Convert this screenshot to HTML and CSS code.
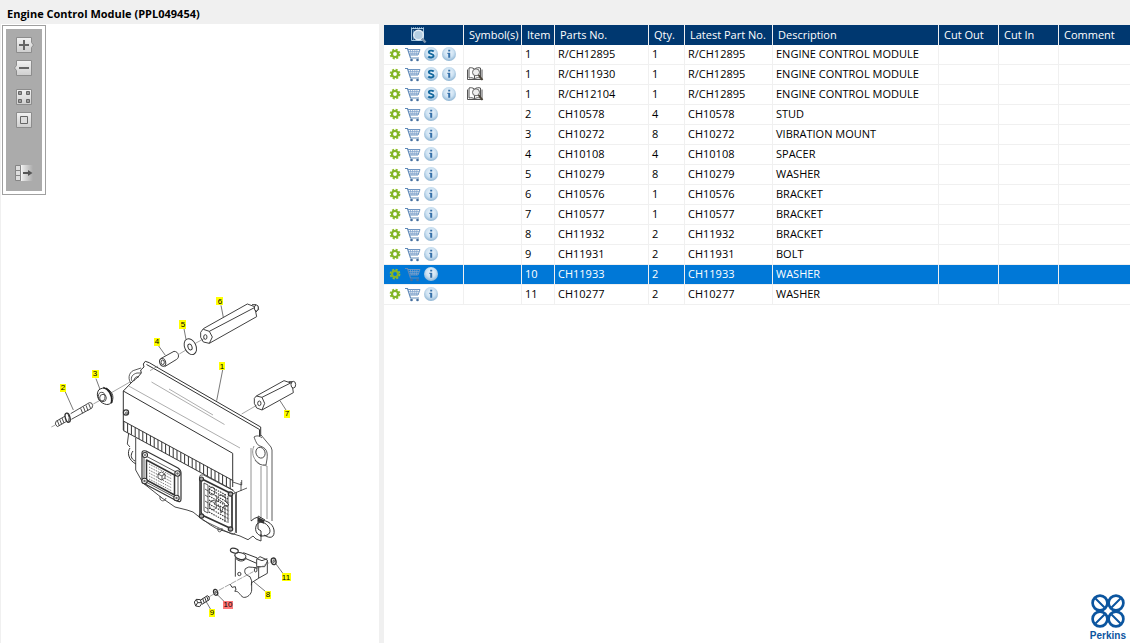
FILE: index.html
```html
<!DOCTYPE html>
<html lang="en">
<head>
<meta charset="utf-8">
<title>Engine Control Module (PPL049454)</title>
<link rel="stylesheet" href="styles.css">
</head>
<body>
<svg class="defs" aria-hidden="true">
  <defs>
    <radialGradient id="disc" cx=".5" cy=".4" r=".6"><stop offset="0" stop-color="#eef6fc"/><stop offset=".55" stop-color="#cfe3f3"/><stop offset="1" stop-color="#8db4d3"/></radialGradient>
    <linearGradient id="key" x1="0" y1="0" x2="0" y2="1"><stop offset="0" stop-color="#f2f2f2"/><stop offset="1" stop-color="#cecece"/></linearGradient>
    <linearGradient id="fade"><stop offset="0" stop-color="#f0f0f0"/><stop offset="1" stop-color="#ababab"/></linearGradient>
    <symbol id="gear" viewBox="0 0 14 16">
      <circle cx="7" cy="8" r="4.3" fill="none" stroke="#8fbe2e" stroke-width="2.2" stroke-dasharray="2 1.38"/>
      <circle cx="7" cy="8" r="3" fill="none" stroke="#83b428" stroke-width="2.2"/>
    </symbol>
    <symbol id="cart" viewBox="0 0 17 16">
      <path d="M1 2.500h2.500l3 9.500H15" fill="none" stroke="#5f89b8" stroke-width="1.200"/>
      <path d="M4 3.500h12l-2 5.500H6" fill="none" stroke="#6c93c0"/>
      <path d="M5 5.400h10M5.500 7.300h9M6.300 3.500l1 5.500M8.500 3.500L9 9M10.800 3.500V9M13 3.500L12.500 9" stroke="#7fa2cb" stroke-width=".8"/>
      <circle cx="7.500" cy="14" r="1.300" fill="#456f9f"/><circle cx="13.500" cy="14" r="1.300" fill="#456f9f"/>
    </symbol>
    <symbol id="info" viewBox="0 0 16 16">
      <circle cx="8" cy="8" r="7" fill="url(#disc)"/>
      <path d="M7.2 3.8h2v1.8h-2zM6.4 6.8h2.800v5H7.200V8h-.8z" fill="#3670a8"/>
    </symbol>
    <symbol id="super" viewBox="0 0 16 16">
      <circle cx="8" cy="8" r="7" fill="url(#disc)"/>
      <path d="M10.7 5.5C9.5 4.2 5.8 4.2 5.8 6.2c0 2 4.8 1.3 4.8 3.6 0 2.1-4 2.1-5.3.7" fill="none" stroke="#15699f" stroke-width="1.9"/>
    </symbol>
    <symbol id="book" viewBox="0 0 17 16">
      <path d="M7.500 3C5.500 1.500 3.500 1.500 2 2v10c2-.6 4-.3 5.500 1 1.500-1.300 3.500-1.600 6-1V2c-2-.5-4-.5-6 1v10" fill="#fff" stroke="#555"/>
      <path d="M.500 3.500v10h14.500v-10" fill="none" stroke="#555"/>
      <circle cx="9" cy="6.300" r="3.500" fill="#eee" stroke="#666"/>
      <path d="M11.500 9l4 5" stroke="#4b4438" stroke-width="2"/>
    </symbol>
    <symbol id="find" viewBox="0 0 18 18">
      <path d="M1.500 2.500h12v12h-12z" fill="#13406f" stroke="#9fc4df"/>
      <path d="M1 2h13" stroke="#d6e6f2" stroke-dasharray="1 1"/>
      <path d="M3.500 4v10" stroke="#4f86b2"/>
      <circle cx="8.500" cy="9" r="4.800" fill="#b5cfe2" stroke="#e4eef6" stroke-width="1.400"/>
      <path d="M12 12.500l3.500 4" stroke="#7d95ad" stroke-width="2.400"/>
    </symbol>
  </defs>
</svg>

<header class="title-bar"><h1>Engine Control Module (PPL049454)</h1></header>
<main class="panes">
  <section class="viewer" aria-label="Illustration">
    <div class="toolbar" role="toolbar" aria-label="View">
      <button aria-label="Zoom in"><svg viewBox="0 0 18 16"><path d="M.500.500h15v5l2 2.500-2 2.500v5H.500z" fill="url(#key)" stroke="#8c8c8c"/><path d="M8 3v10M3 8h10" stroke="#666" stroke-width="2"/></svg></button>
      <button aria-label="Zoom out"><svg viewBox="0 0 18 16"><path d="M.500.500h15v15H.500v-5L-1.500 8l2-2.500z" fill="url(#key)" stroke="#8c8c8c"/><path d="M3 8h10" stroke="#666" stroke-width="2"/></svg></button>
      <button class="spaced" aria-label="Tile"><svg viewBox="0 0 18 16"><path d="M.500.500h15v15H.500z" fill="url(#key)" stroke="#8c8c8c"/><path d="M2.500 2.500h3v3h-3zM10.500 2.500h3v3h-3zM2.500 10.500h3v3h-3zM10.500 10.500h3v3h-3z" fill="#999" stroke="#666"/></svg></button>
      <button aria-label="Fit"><svg viewBox="0 0 18 16"><path d="M.500.500h15v15H.500z" fill="url(#key)" stroke="#8c8c8c"/><path d="M4.500 4.500h7v7h-7z" fill="#ddd" stroke="#666"/></svg></button>
      <button class="apart" aria-label="Hide list"><svg viewBox="0 0 18 16"><path d="M5 0h12v16H5z" fill="url(#fade)"/><path d="M-.500.500h5v5h-5zM-.500 5.500h5v5h-5zM-.500 10.500h5v5h-5z" fill="#ddd" stroke="#858585"/><path d="M5.500 0v16" stroke="#f4f4f4"/><path d="M7 8h6" stroke="#555" stroke-width="2"/><path d="M12 5l4.500 3-4.500 3z" fill="#555"/></svg></button>
    </div>

    <svg class="drawing" viewBox="50 290 250 330" role="img" aria-label="Exploded view">
      <g fill="none" stroke="#333" stroke-width=".8" stroke-linejoin="round">
        <!-- housing -->
        <path d="M130.700 383C127 377 130 371 135 370l6-2M132 381c-2-4 1-7 5-8l4 0M134 381c0-3 2-5 5-4" />
        <path d="M123.300 430v-39l8.700-9 6-5 3.300-4-.6-3 3.300-3-.7-3 2-2.700 4 1.400L160 369l100.700 58v9M146.500 364.500L160 372l99.500 57.500v7" stroke-width="1"/>
        <path d="M123.300 391l109.400 62.300V487" stroke-width="1"/>
        <path d="M128.700 386L240 448M151.500 382l73 42.500M169 389l44 26" stroke="#777" stroke-width=".6"/>
        <circle cx="126" cy="412.500" r="2.600" stroke-width="1.200"/><circle cx="126.500" cy="413" r="1"/>
        <g transform="translate(123.300 421) skewY(28.500)"><path d="M0 0h110M0 9.500h110" stroke-width="1"/><path d="M0 4.700h110" stroke-width="9.500" stroke-dasharray="1 2.800"/></g>
        <path d="M128.700 433l-1.400 11 2.700 3M135.700 438v32l7.300 13 19 15 13 9 12 3 6 2 5 4 5.300 3.700 6.700 5 6.700 4 23.300 7.300 8 3.700 5-3.700 3 3 5 2v-7" stroke-width=".9"/>
        <path d="M130 448c-3 4-2 12 6 16M133 451c-3 4-2 8 2 10" stroke-width="1"/>
        <path d="M160 496v3c2 3 5 2 6-1M218 528v3c2 2 4 0 4-3"/>
        <path d="M232.700 482l9 3v-5M230 495l17-7M241 482v9M236.500 492v41" />
        <!-- left connector -->
        <path d="M142 453q0-3 4-2l32 17q3 2 3 5v26q0 4-4 2l-32-17q-3-2-3-5z" stroke-width="1.200"/>
        <path d="M144 455l34 18v26l-34-18z"/>
        <path d="M146.500 460l28 15v20l-28-15z" stroke-width="1.500"/>
        <path d="M149 464l23 12M149 467l23 12M149 470l23 12M149 473l23 12M149 476l23 12M149 479l23 12" stroke-dasharray="1 1"/>
        <g fill="#fff" stroke-width="1.100"><circle cx="145" cy="455" r="2.500"/><circle cx="177.500" cy="473.500" r="2.700"/><circle cx="144.500" cy="481" r="2.700"/><circle cx="176.500" cy="498" r="2.700"/><path d="M158 474l3.500-2 3.500 2v4l-3.500 2-3.500-2zM158 474l4 2 3-2M162 476v4" stroke-width=".8"/></g>
        <g fill="#666" stroke="none"><circle cx="145" cy="455" r="1"/><circle cx="177.500" cy="473.500" r="1.200"/><circle cx="144.500" cy="481" r="1.200"/><circle cx="176.500" cy="498" r="1.200"/></g>
        <!-- right connector -->
        <path d="M199.500 477q0-3 4-2l29 15q3 2 3 5v36q0 4-4 3l-29-14q-3-2-3-5z"/>
        <path d="M202 479l28 14q2 1 2 4v32l-28-13q-3-1-3-4v-31z" stroke-width="1.700"/>
        <path d="M204 483v28l4 2v-28zM205 489l3 2M205 495l3 2M205 501l3 2M205 507l3 2M225 494v28M228 496v27"/>
        <g fill="#fff"><ellipse cx="212" cy="491" rx="3" ry="4"/><ellipse cx="221" cy="501" rx="5" ry="6"/><ellipse cx="213" cy="505" rx="3.500" ry="4.500"/><path d="M215 495l4 5-5 4 6 3 1 6 3-7 5-1-4-4M218 499l7 5"/></g>
        <path d="M209 486l17 9M209 489l19 10M209 492l20 11M209 496l19 11M209 500l20 11M209 504l20 11M209 508l20 11M209 512l18 10" stroke-dasharray="1.500 1" stroke-width="1.100"/>
        <g fill="#aaa" stroke-width="1.200"><circle cx="201.500" cy="479" r="2"/><circle cx="230.500" cy="494" r="2.200"/><circle cx="201.500" cy="516" r="2.200"/><circle cx="230.500" cy="529" r="2.200"/></g>
        <!-- right flange -->
        <path d="M261 435l10 12 1 3v71M254 437c3-2 6-1 8 1M254 437c2 5 3 8 6 9 6 2 8 5 7 13l-1 6q-7 1-11-5"/>
        <ellipse cx="260.500" cy="452.700" rx="4.500" ry="5.500" transform="rotate(-20 260.500 452.700)"/>
        <path d="M251 448v73M254 446c-3 6-1 14 6 18M261 466v52M263 465l4 1v53" stroke="#777"/>
        <path d="M251 521q3-3 7-4v12l3 2v6M258 516l7 4M258 519l6 3" stroke-width="1"/>
        <path d="M258 522c6-4 15 1 16 8 1 8-4 9-10 5M257 524c-3 5-1 11 5 12 8 0 10-5 6-10s-9-4-11-2z" stroke-width="1"/>
        <path d="M258 518l6 3M258 520l6 3" stroke-width="1.600"/>

        <!-- stud and mount -->
        <g transform="translate(40 290) scale(.333333)" stroke-width="2.600">
          <path d="M34 411l12-6M160 342l20-11M216 307l54-31" stroke="#777" stroke-width="2"/>
          <path d="M76 378l-28 16q-6 8 4 16l28-16M52 392l6 15M59 388l6 15M66 384l6 15M92 371l56-33q8-2 10 8l-2 8-62 34M122 355l6 15M130 350l6 16M138 346l6 16M146 341l6 15"/>
          <ellipse cx="83" cy="383" rx="7" ry="14" transform="rotate(-15 83 383)" fill="#fff" stroke-width="4"/><path d="M84 372q6 10 2 22"/>
          <path d="M176 300c14-12 36-4 42 16 4 20-10 32-24 26-18-6-28-26-18-42z" fill="#fff" stroke-width="3"/>
          <path d="M190 292q26 10 26 46M198 294q22 14 16 46" stroke-width="4" stroke="#222"/>
          <ellipse cx="185" cy="320" rx="10" ry="13"/><ellipse cx="189" cy="324" rx="10" ry="11"/>
          <path d="M76 306l24 54M168 266l12 32M356 168l20 28" stroke-width="2"/>
        </g>
        <!-- spacer, washer, rods -->
        <g transform="translate(160 290) scale(.333333)" stroke-width="2.800">
          <path d="M58 192l20-12M106 160l28-15M245 372l45-26M-30 242l24-14" stroke="#777" stroke-width="2"/>
          <path d="M2 206l40-22c14 0 18 18 8 24l-36 22" fill="#fff"/>
          <ellipse cx="8" cy="217" rx="9" ry="12" fill="#fff" transform="rotate(-15 8 217)"/><ellipse cx="8" cy="217" rx="5" ry="7"/>
          <ellipse cx="91" cy="170" rx="17" ry="25" transform="rotate(-25 91 170)"/><ellipse cx="90" cy="171" rx="6" ry="9" transform="rotate(-20 90 171)"/>
          <path d="M122 127l8-11L262 42l22 8 6 30-142 80-18-4-8-14zM130 118l18 6 9 17-9 19M148 124l137-72M276 44l12 0q9 6 8 14l-8 8"/>
          <ellipse cx="136" cy="141" rx="5" ry="7"/><ellipse cx="289" cy="54" rx="6" ry="9" fill="#fff"/>
          <path d="M283 325l6-7 83-46 24 8 4 28-94 52-16-6-7-14zM289 318l17 4 8 18-8 20M306 322l86-43"/>
          <ellipse cx="298" cy="340" rx="5" ry="7"/><ellipse cx="400" cy="284" rx="7" ry="10" fill="#fff"/><path d="M386 275h12"/>
          <path d="M183 46l7 36M72 116l6 32M188 240l-18 92M360 332l18 28" stroke-width="2"/>
        </g>
        <!-- bracket, bolt, washers -->
        <g transform="translate(180 540) scale(.333333)" stroke-width="2.800">
          <ellipse cx="163" cy="32" rx="12" ry="7" transform="rotate(15 163 32)" stroke-width="3.500"/>
          <ellipse cx="181" cy="48" rx="17" ry="10" transform="rotate(12 181 48)" stroke-width="3"/>
          <path d="M165 46c4 10 20 18 34 10M168 56q12 12 26 4M190 38l42 16M198 56l32 14" stroke-width="3"/>
          <path d="M166 52v58M150 132l6 10 10-2 2 10-4 2M164 154c14-2 14 12 26 18 12 2 25-10 25-22v-22l22-14 25-14V60l-22-10-10 8v22h24l8-16M230 56l16 6 16-6M236 80v34M196 86c-6 14 4 20 14 24q8 12 4 26M196 86q10-8 22-4l18 2"/>
          <ellipse cx="227" cy="90" rx="4" ry="6"/><ellipse cx="178" cy="102" rx="5" ry="5"/>
          <path d="M88 170l14-8M116 151l104-56M232 86l42-21" stroke="#777" stroke-width="2" stroke-dasharray="18 3"/>
          <ellipse cx="281" cy="64" rx="7" ry="10" transform="rotate(-15 281 64)" stroke-width="4"/><ellipse cx="281" cy="64" rx="2" ry="4"/>
          <ellipse cx="107" cy="157" rx="6" ry="9" transform="rotate(-15 107 157)" stroke-width="4"/><ellipse cx="107" cy="157" rx="2" ry="3"/>
          <path d="M43 186l6-8 12 1 4 12-6 9-12-2zM49 178l4 10-6 10M53 188h12" stroke-width="3"/>
          <path d="M62 180l20-13q8 2 6 12l-22 14M68 176l5 13M74 172l5 13M80 169l5 13" stroke-width="3"/>
          <path d="M288 72l22 30M222 126l34 28M112 164l20 20M78 184l14 24" stroke-width="2"/>
        </g>
      </g>
      <g class="tags">
        <path d="M60 384h6v8h-6zM92 370h7v8h-7zM154 338h6v8h-6zM179 320h7v9h-7zM216 297h7v8h-7zM219 362h6v8h-6zM284 410h6v8h-6zM282 573h9v8h-9zM265 591h6v8h-6zM209 609h6v8h-6z" fill="#ff0"/>
        <path d="M223 601h10v8h-10z" fill="#f77"/>
        <text x="63" y="390">2</text><text x="95" y="376">3</text><text x="157" y="344">4</text><text x="183" y="327">5</text><text x="220" y="304">6</text><text x="222" y="369">1</text><text x="287" y="416">7</text><text x="286" y="580">11</text><text x="268" y="597">8</text><text x="228" y="607">10</text><text x="212" y="615">9</text>
      </g>
    </svg>
  </section>

  <section class="list" aria-label="Parts list">
    <table>
      <colgroup><col class="c-tools"><col class="c-sym"><col class="c-item"><col class="c-part"><col class="c-qty"><col class="c-latest"><col class="c-desc"><col class="c-cut"><col class="c-cut"><col></colgroup>
      <thead><tr><th class="find-cell"><button aria-label="Find"><svg class="find"><use href="#find"/></svg></button></th><th>Symbol(s)</th><th>Item</th><th>Parts No.</th><th>Qty.</th><th>Latest Part No.</th><th>Description</th><th>Cut Out</th><th>Cut In</th><th>Comment</th></tr></thead>
      <tbody>
        <tr><td><div class="tools"><button aria-label="Options"><svg class="gear"><use href="#gear"/></svg></button><button aria-label="Add to cart"><svg class="cart"><use href="#cart"/></svg></button><button aria-label="Supersession"><svg class="disc"><use href="#super"/></svg></button><button aria-label="Information"><svg class="disc"><use href="#info"/></svg></button></div></td><td></td><td>1</td><td>R/CH12895</td><td>1</td><td>R/CH12895</td><td>ENGINE CONTROL MODULE</td><td></td><td></td><td></td></tr>
        <tr><td><div class="tools"><button aria-label="Options"><svg class="gear"><use href="#gear"/></svg></button><button aria-label="Add to cart"><svg class="cart"><use href="#cart"/></svg></button><button aria-label="Supersession"><svg class="disc"><use href="#super"/></svg></button><button aria-label="Information"><svg class="disc"><use href="#info"/></svg></button></div></td><td><svg class="book"><use href="#book"/></svg></td><td>1</td><td>R/CH11930</td><td>1</td><td>R/CH12895</td><td>ENGINE CONTROL MODULE</td><td></td><td></td><td></td></tr>
        <tr><td><div class="tools"><button aria-label="Options"><svg class="gear"><use href="#gear"/></svg></button><button aria-label="Add to cart"><svg class="cart"><use href="#cart"/></svg></button><button aria-label="Supersession"><svg class="disc"><use href="#super"/></svg></button><button aria-label="Information"><svg class="disc"><use href="#info"/></svg></button></div></td><td><svg class="book"><use href="#book"/></svg></td><td>1</td><td>R/CH12104</td><td>1</td><td>R/CH12895</td><td>ENGINE CONTROL MODULE</td><td></td><td></td><td></td></tr>
        <tr><td><div class="tools"><button aria-label="Options"><svg class="gear"><use href="#gear"/></svg></button><button aria-label="Add to cart"><svg class="cart"><use href="#cart"/></svg></button><button aria-label="Information"><svg class="disc"><use href="#info"/></svg></button></div></td><td></td><td>2</td><td>CH10578</td><td>4</td><td>CH10578</td><td>STUD</td><td></td><td></td><td></td></tr>
        <tr><td><div class="tools"><button aria-label="Options"><svg class="gear"><use href="#gear"/></svg></button><button aria-label="Add to cart"><svg class="cart"><use href="#cart"/></svg></button><button aria-label="Information"><svg class="disc"><use href="#info"/></svg></button></div></td><td></td><td>3</td><td>CH10272</td><td>8</td><td>CH10272</td><td>VIBRATION MOUNT</td><td></td><td></td><td></td></tr>
        <tr><td><div class="tools"><button aria-label="Options"><svg class="gear"><use href="#gear"/></svg></button><button aria-label="Add to cart"><svg class="cart"><use href="#cart"/></svg></button><button aria-label="Information"><svg class="disc"><use href="#info"/></svg></button></div></td><td></td><td>4</td><td>CH10108</td><td>4</td><td>CH10108</td><td>SPACER</td><td></td><td></td><td></td></tr>
        <tr><td><div class="tools"><button aria-label="Options"><svg class="gear"><use href="#gear"/></svg></button><button aria-label="Add to cart"><svg class="cart"><use href="#cart"/></svg></button><button aria-label="Information"><svg class="disc"><use href="#info"/></svg></button></div></td><td></td><td>5</td><td>CH10279</td><td>8</td><td>CH10279</td><td>WASHER</td><td></td><td></td><td></td></tr>
        <tr><td><div class="tools"><button aria-label="Options"><svg class="gear"><use href="#gear"/></svg></button><button aria-label="Add to cart"><svg class="cart"><use href="#cart"/></svg></button><button aria-label="Information"><svg class="disc"><use href="#info"/></svg></button></div></td><td></td><td>6</td><td>CH10576</td><td>1</td><td>CH10576</td><td>BRACKET</td><td></td><td></td><td></td></tr>
        <tr><td><div class="tools"><button aria-label="Options"><svg class="gear"><use href="#gear"/></svg></button><button aria-label="Add to cart"><svg class="cart"><use href="#cart"/></svg></button><button aria-label="Information"><svg class="disc"><use href="#info"/></svg></button></div></td><td></td><td>7</td><td>CH10577</td><td>1</td><td>CH10577</td><td>BRACKET</td><td></td><td></td><td></td></tr>
        <tr><td><div class="tools"><button aria-label="Options"><svg class="gear"><use href="#gear"/></svg></button><button aria-label="Add to cart"><svg class="cart"><use href="#cart"/></svg></button><button aria-label="Information"><svg class="disc"><use href="#info"/></svg></button></div></td><td></td><td>8</td><td>CH11932</td><td>2</td><td>CH11932</td><td>BRACKET</td><td></td><td></td><td></td></tr>
        <tr><td><div class="tools"><button aria-label="Options"><svg class="gear"><use href="#gear"/></svg></button><button aria-label="Add to cart"><svg class="cart"><use href="#cart"/></svg></button><button aria-label="Information"><svg class="disc"><use href="#info"/></svg></button></div></td><td></td><td>9</td><td>CH11931</td><td>2</td><td>CH11931</td><td>BOLT</td><td></td><td></td><td></td></tr>
        <tr class="selected"><td><div class="tools"><button aria-label="Options"><svg class="gear"><use href="#gear"/></svg></button><button aria-label="Add to cart"><svg class="cart"><use href="#cart"/></svg></button><button aria-label="Information"><svg class="disc"><use href="#info"/></svg></button></div></td><td></td><td>10</td><td>CH11933</td><td>2</td><td>CH11933</td><td>WASHER</td><td></td><td></td><td></td></tr>
        <tr><td><div class="tools"><button aria-label="Options"><svg class="gear"><use href="#gear"/></svg></button><button aria-label="Add to cart"><svg class="cart"><use href="#cart"/></svg></button><button aria-label="Information"><svg class="disc"><use href="#info"/></svg></button></div></td><td></td><td>11</td><td>CH10277</td><td>2</td><td>CH10277</td><td>WASHER</td><td></td><td></td><td></td></tr>
      </tbody>
    </table>
    <div class="brand">
      <svg viewBox="0 0 36 36" aria-hidden="true"><g fill="none" stroke="#0b559f" stroke-width="2.700"><circle cx="10" cy="10" r="7.400"/><circle cx="26" cy="10" r="7.400"/><circle cx="10" cy="26" r="7.400"/><circle cx="26" cy="26" r="7.400"/><path d="M5.500 5.500l9 9M30.500 5.500l-9 9M5.500 30.500l9-9M30.500 30.500l-9-9" stroke-width="2"/></g></svg>
      <span>Perkins</span>
    </div>
  </section>
</main>
</body>
</html>
```
FILE: styles.css
```css
* { box-sizing: border-box; }

body {
  display: flex;
  flex-direction: column;
  min-height: 100vh;
  margin: 0;
  background: #f0f0f0;
  color: #000;
  font: 11px/16px "Open Sans", "Noto Sans", sans-serif;
}

button {
  display: block;
  padding: 0;
  border: 0;
  background: none;
  cursor: pointer;
}

svg { display: block; }

.defs {
  position: absolute;
  width: 0;
  height: 0;
}

.title-bar { padding: 6px 7px 2px; }

.title-bar h1 {
  margin: 0;
  font-size: 11px;
  line-height: 16px;
}

.panes {
  display: flex;
  flex: 1;
  gap: 5px;
  padding-left: 1px;
}

.viewer {
  display: flex;
  flex: 0 0 378px;
  flex-direction: column;
  align-items: flex-start;
  padding: 1px 0 0 1px;
  background: #fff;
}

.toolbar {
  display: flex;
  flex-direction: column;
  gap: 7px;
  padding: 8px 8px 10px 10px;
  border: 3px solid #fff;
  outline: 1px solid #a0a0a0;
  margin: 1px;
  background: #ababab;
}

.toolbar svg {
  width: 18px;
  height: 16px;
  overflow: visible;
}

.toolbar .spaced { margin-top: 6px; }
.toolbar .apart { margin-top: 30px; }

.drawing {
  width: 250px;
  margin: auto 0 23px 48px;
}

.tags {
  font: 8px "Liberation Sans", sans-serif;
  text-anchor: middle;
}

.list {
  display: flex;
  flex: 1;
  flex-direction: column;
  margin-top: 1px;
  background: #fff;
}

table {
  width: 100%;
  border-spacing: 0;
  table-layout: fixed;
}

.c-tools { width: 80px; }
.c-sym { width: 58px; }
.c-item { width: 33px; }
.c-part { width: 94px; }
.c-qty { width: 36px; }
.c-latest { width: 88px; }
.c-desc { width: 166px; }
.c-cut { width: 60px; }

th,
td {
  height: 20px;
  padding: 0 0 0 3px;
  border-right: 1px solid #f0f0f0;
  line-height: 18px;
  text-align: left;
  vertical-align: top;
  white-space: nowrap;
}

th {
  padding-left: 5px;
  background: #003870;
  color: #fff;
  font-weight: 400;
  line-height: 19px;
}

td { border-bottom: 1px solid #f0f0f0; }

th:last-child,
td:last-child { border-right: 0; }

.find-cell {
  padding-top: 1px;
  padding-left: 26px;
}

.tools {
  display: flex;
  gap: 2px;
  padding: 1px 0 0 1px;
}

.gear { width: 14px; height: 16px; }
.cart { width: 17px; height: 16px; }
.disc { width: 16px; height: 16px; }
.find { width: 18px; height: 18px; }

.book {
  width: 17px;
  height: 16px;
  margin-top: 1px;
}

.selected td {
  background: #0078d7;
  color: #fff;
}

.brand {
  display: flex;
  flex-direction: column;
  align-items: center;
  align-self: flex-end;
  margin: auto 4px 0 0;
  color: #0b559f;
  font: bold 10px/14px "Liberation Sans", sans-serif;
}

.brand svg {
  width: 36px;
  height: 36px;
}
```
